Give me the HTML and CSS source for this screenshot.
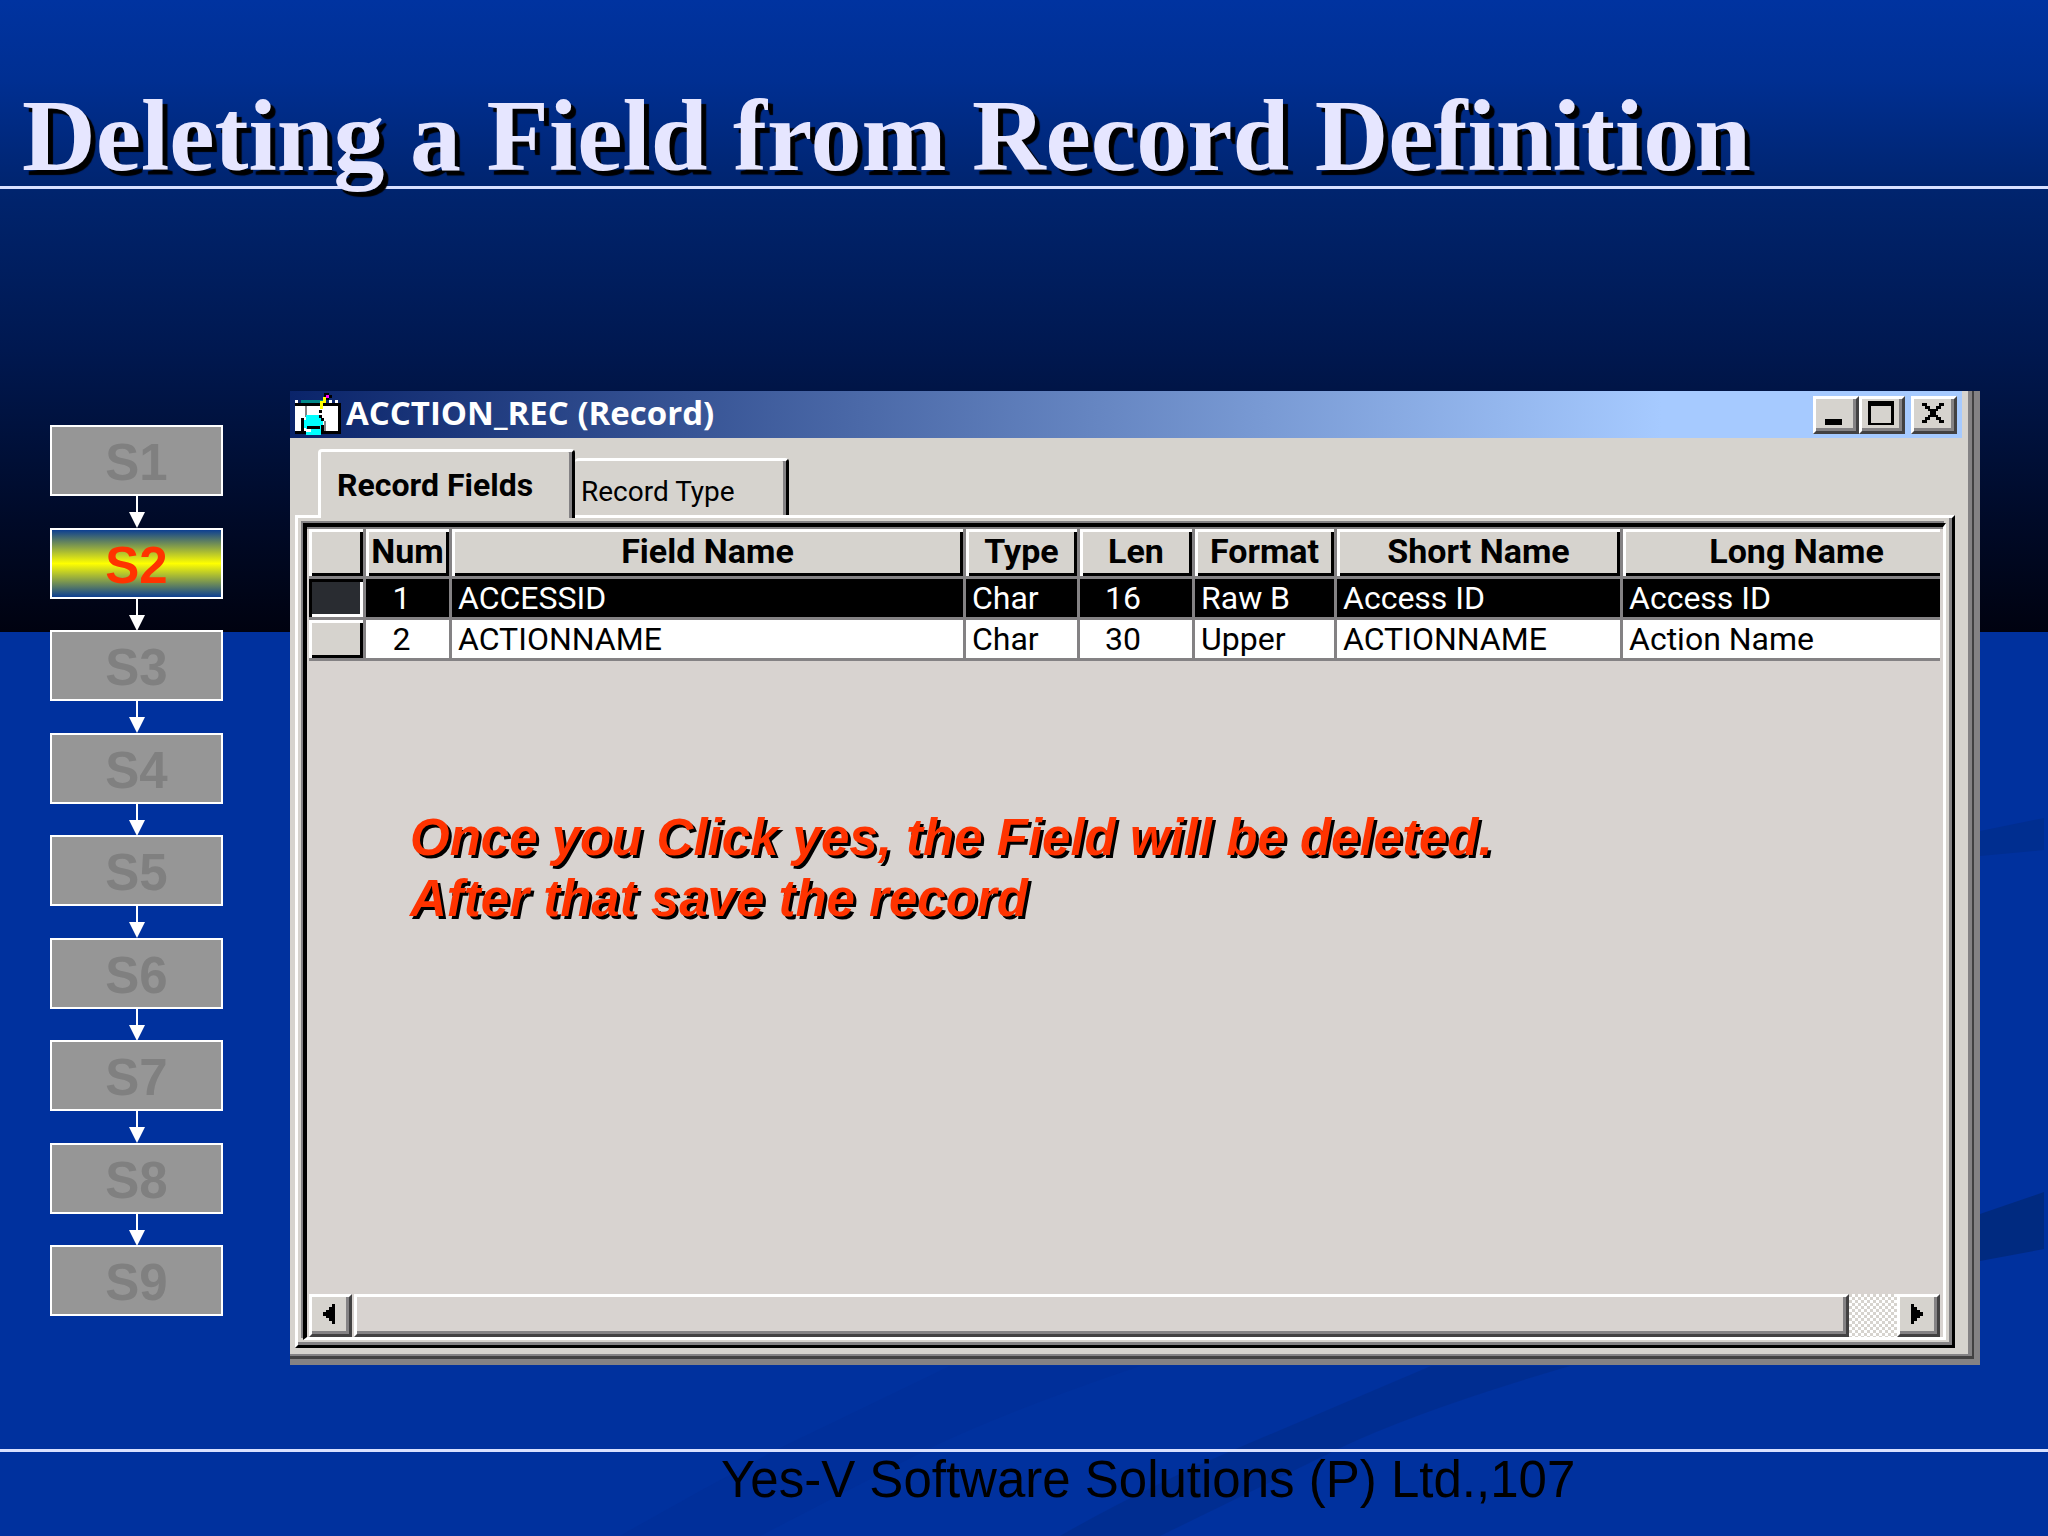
FILE: index.html
```html
<!DOCTYPE html>
<html lang="en">
<head>
	<meta charset="UTF-8">
	<title>Deleting a Field from Record Definition</title>
	<link rel="stylesheet" href="styles.css">
</head>
<body>
	<div class="slide">
		<svg class="swoosh" viewBox="0 0 2048 1536" preserveAspectRatio="none" aria-hidden="true">
			<path fill="#002e90" d="M1980 831L2044 818V850L1980 856Z"/>
			<path fill="#002a80" d="M1980 1214L2044 1192V1249L1980 1261Z"/>
			<path fill="#002c8c" d="M1431 1366H1570Q1420 1410 1340 1448L1160 1536H1060Q1140 1490 1238 1448Z" opacity=".7"/>
			<path fill="#002e93" d="M950 1366H1140Q1010 1410 930 1448L760 1536H620Q700 1490 780 1448Z" opacity=".4"/>
		</svg>
		<header class="top">
			<h1>Deleting a Field from Record Definition</h1>
		</header>
		<main class="main">
			<ol class="steps">
				<li class="step">S1</li>
				<li class="step active">S2</li>
				<li class="step">S3</li>
				<li class="step">S4</li>
				<li class="step">S5</li>
				<li class="step">S6</li>
				<li class="step">S7</li>
				<li class="step">S8</li>
				<li class="step">S9</li>
			</ol>
			<section class="window">
				<div class="titlebar">
					<svg class="icon" viewBox="0 0 46 44" shape-rendering="crispEdges" aria-hidden="true">
						<path fill="#000" d="M0 10H46V41H0Z"/>
						<path fill="#fff" d="M0 13H43V38H0ZM0 7H3V10H0ZM34 7H37V10H34ZM40 7H43V10H40Z"/>
						<path fill="#088" d="M6 7H31V10H6Z"/>
						<path fill="#848284" d="M10 13H12V24H10ZM29 28H31V38H29Z"/>
						<path fill="#0ff" d="M11 22H26V42H11ZM8 27H28V35H8Z"/>
						<path fill="#000" d="M6 25H9V40H6ZM12 33H25V36H12ZM26 25H29V28H26ZM26 32H29V40H26ZM24 17H27V20H24ZM24 22H27V25H24Z"/>
						<path fill="#fff" d="M11 36H16V39H11Z"/>
						<path fill="#ff0" d="M25 8H28V16H25ZM28 4H31V10H28Z"/>
						<path fill="#000" d="M29 0H34V2H37V5H34V7H31V4H29Z"/>
						<path fill="#f0f" d="M31 2H34V5H31Z"/>
					</svg>
					<h2>ACCTION_REC (Record)</h2>
					<div class="buttons">
						<button type="button" aria-label="Minimize"><svg viewBox="0 0 26 24"><path d="M3 18H20V24H3Z"/></svg></button>
						<button type="button" aria-label="Maximize"><svg viewBox="0 0 26 24"><path fill-rule="evenodd" d="M0 0H26V24H0ZM3 5V22H23V5Z"/></svg></button>
						<button type="button" class="close" aria-label="Close"><svg viewBox="0 0 26 24"><path d="M2 2H7V5H10V8H16V5H19V2H24V5H21V8H18V10H16V14H18V16H21V19H24V22H19V19H16V16H10V19H7V22H2V19H5V16H8V14H10V10H8V8H5V5H2Z"/></svg></button>
					</div>
				</div>
				<div class="tabs" role="tablist">
					<button type="button" class="tab selected" role="tab" aria-selected="true">Record Fields</button>
					<button type="button" class="tab" role="tab" aria-selected="false">Record Type</button>
				</div>
				<div class="panel">
					<div class="inner">
						<table class="grid">
							<colgroup>
								<col class="c-sel"><col class="c-num"><col class="c-field"><col class="c-type"><col class="c-len"><col class="c-format"><col class="c-short"><col class="c-long">
							</colgroup>
							<thead>
								<tr><th></th><th>Num</th><th>Field Name</th><th>Type</th><th>Len</th><th>Format</th><th>Short Name</th><th>Long Name</th></tr>
							</thead>
							<tbody>
								<tr class="current"><td class="sel"></td><td class="center">1</td><td>ACCESSID</td><td>Char</td><td class="len">16</td><td>Raw B</td><td>Access ID</td><td>Access ID</td></tr>
								<tr><td class="sel"></td><td class="center">2</td><td>ACTIONNAME</td><td>Char</td><td class="len">30</td><td>Upper</td><td>ACTIONNAME</td><td>Action Name</td></tr>
							</tbody>
						</table>
						<p class="note">Once you Click yes, the Field will be deleted.<br>After that save the record</p>
						<div class="scrollbar">
							<button type="button" aria-label="Scroll left"><svg viewBox="0 0 12 20"><path d="M12 0V20H9V17H6V14H3V12H0V8H3V6H6V3H9V0Z"/></svg></button>
							<div class="thumb"></div>
							<div class="track"></div>
							<button type="button" aria-label="Scroll right"><svg viewBox="0 0 12 20"><path d="M0 0V20H3V17H6V14H9V12H12V8H9V6H6V3H3V0Z"/></svg></button>
						</div>
					</div>
				</div>
			</section>
		</main>
		<footer class="footer">Yes-V Software Solutions (P) Ltd.,107</footer>
	</div>
</body>
</html>
```
FILE: styles.css
```css
*{
	box-sizing:border-box;
}
body{
	margin:0;
	font-family:"Liberation Sans",Arial,sans-serif;
}
.slide{
	position:relative;
	display:flex;
	flex-direction:column;
	min-height:100vh;
	background:linear-gradient(#0033a0 0,#002f92 80px,#00246e 190px,#001850 350px,#000a28 520px,#000210 632px,#00319e 632px);
}
.swoosh{
	position:absolute;
	top:0;
	left:0;
	width:100%;
	height:100%;
}
.top{
	position:relative;
	height:189px;
	padding:84px 0 0 22px;
	border-bottom:3px solid #d8e0ff;
}
h1{
	margin:0;
	font-family:"Liberation Serif","Times New Roman",serif;
	font-size:102px;
	line-height:104px;
	color:#e6e6ff;
	text-shadow:5px 5px 1px #000;
	white-space:nowrap;
}
.main{
	position:relative;
	flex:1;
	display:flex;
	padding:202px 68px 84px 50px;
	gap:67px;
}
.steps{
	flex:none;
	display:flex;
	flex-direction:column;
	justify-content:space-between;
	width:173px;
	height:891px;
	margin:34px 0 0;
	padding:0;
	list-style:none;
}
.step{
	position:relative;
	height:71px;
	border:2px solid #fff;
	background:#969696;
	color:#808080;
	font-size:51px;
	font-weight:bold;
	line-height:72px;
	text-align:center;
}
.step.active{
	background:linear-gradient(#0d3f92,#ff0 50%,#0d3f92);
	color:#ff3300;
}
/* arrow to the next step */
.step:not(:last-child)::before{
	content:"";
	position:absolute;
	top:69px;
	left:84px;
	width:2px;
	height:20px;
	background:#fff;
}
.step:not(:last-child)::after{
	content:"";
	position:absolute;
	top:85px;
	left:77px;
	border:8px solid transparent;
	border-top:16px solid #fff;
	border-bottom:0;
}
.window{
	flex:1;
	display:flex;
	flex-direction:column;
	min-width:0;
	padding-right:6px;
	background:#d6d3ce;
	border:solid #848284;
	border-width:0 6px 6px 0;
	box-shadow:inset -2px -3px #424142,inset -6px -5px #848284;
}
.titlebar{
	display:flex;
	align-items:center;
	height:47px;
	margin-right:6px;
	padding:0 5px;
	background:linear-gradient(90deg,#0a246a,#a6caff 82%);
}
.icon{
	flex:none;
	width:46px;
	height:44px;
}
h2{
	flex:1;
	margin:0 0 3px 5px;
	color:#fff;
	font-family:"Open Sans","Noto Sans",sans-serif;
	font-size:33px;
	line-height:40px;
}
.buttons{
	display:flex;
}
.buttons button,.scrollbar button{
	display:flex;
	align-items:center;
	justify-content:center;
	width:46px;
	height:38px;
	padding:0 3px 3px 0;
	background:#d6d3ce;
	border:3px solid;
	border-color:#fff #424142 #424142 #fff;
	box-shadow:inset -3px -3px #848284;
}
.buttons svg{
	width:26px;
	height:24px;
}
.buttons .close{
	margin-left:6px;
}
.tabs{
	display:flex;
	align-items:flex-end;
	padding:11px 0 0 28px;
	height:77px;
}
.tab{
	height:57px;
	width:214px;
	padding:6px 0 0 6px;
	background:#d6d3ce;
	border:solid;
	border-width:3px 3px 0 0;
	border-color:#fff #000 #000 #fff;
	border-radius:4px 4px 0 0;
	box-shadow:inset -3px 0 #848284;
	color:#000;
	font-family:Roboto,"Liberation Sans",sans-serif;
	font-size:28px;
	text-align:left;
}
.tab.selected{
	position:relative;
	z-index:1;
	width:257px;
	height:69px;
	margin-bottom:-3px;
	padding:0 0 0 16px;
	border-left-width:3px;
	font-size:32px;
	font-weight:bold;
}
.panel{
	flex:1;
	display:flex;
	margin:0 13px 11px 5px;
	border:3px solid;
	border-color:#fff #000 #000 #fff;
	padding:5px 0 0 5px;
	box-shadow:inset -3px -3px #848284;
}
.inner{
	flex:1;
	display:flex;
	flex-direction:column;
	min-width:0;
	margin:0 6px 5px 0;
	padding:2px 3px 0 2px;
	border:solid;
	border-width:4px 3px 3px 4px;
	border-color:#000 #fff #fff #000;
	box-shadow:-2px -2px #848284,inset 0 2px #848284;
	background:#d8d3d0;
}
.grid{
	width:100%;
	border-collapse:separate;
	border-spacing:0;
	table-layout:fixed;
	font-family:Roboto,"Liberation Sans",sans-serif;
	font-size:32px;
}
.c-sel{
	width:57px;
}
.c-num{
	width:86px;
}
.c-field{
	width:514px;
}
.c-type{
	width:114px;
}
.c-len{
	width:115px;
}
.c-format{
	width:142px;
}
.c-short{
	width:286px;
}
.grid th,.grid td{
	padding:0 0 0 6px;
	border:solid #848284;
	border-width:0 3px 3px 0;
	overflow:hidden;
	text-align:left;
	white-space:nowrap;
}
.grid th{
	height:50px;
	padding:0 0 4px;
	font-size:34px;
	line-height:40px;
	text-align:center;
	background:#d6d3ce;
	box-shadow:inset 3px 3px #fff,inset -3px -3px #000;
}
.grid td{
	height:41px;
	background:#fff;
	line-height:38px;
}
.grid .center{
	padding:0 12px 0 0;
	text-align:center;
}
.grid .len{
	padding-left:25px;
}
.grid .sel{
	background:#d6d3ce;
	box-shadow:inset 3px 3px #fff,inset -3px -3px #000;
}
.grid .current td{
	background:#000;
	color:#fff;
}
.grid .current .sel{
	background:#292c31;
	box-shadow:inset 3px 3px #000,inset -3px -3px #fff;
}
.grid th:last-child,.grid td:last-child{
	border-right:0;
}
.grid th:last-child{
	padding-left:30px;
	box-shadow:inset 3px 3px #fff,inset 0 -3px #000;
}
.note{
	flex:1;
	margin:0;
	padding:146px 0 0 101px;
	color:#ff3300;
	font-size:51px;
	font-style:italic;
	font-weight:bold;
	line-height:61px;
	text-shadow:3px 3px #000;
}
.scrollbar{
	display:flex;
	height:43px;
}
.scrollbar button{
	width:43px;
	height:43px;
}
.scrollbar svg{
	width:12px;
	height:20px;
}
.thumb{
	flex:1;
	margin-left:2px;
	border:3px solid;
	border-color:#fff #424142 #424142 #fff;
	box-shadow:inset -3px -3px #848284;
}
.track{
	width:48px;
	background:repeating-conic-gradient(#fff 0 25%,#d6d3ce 0 50%) 0 0/6px 6px;
}
.footer{
	position:relative;
	height:87px;
	padding-left:721px;
	border-top:3px solid #d8e0ff;
	color:#000;
	font-size:51px;
	line-height:56px;
}
```
